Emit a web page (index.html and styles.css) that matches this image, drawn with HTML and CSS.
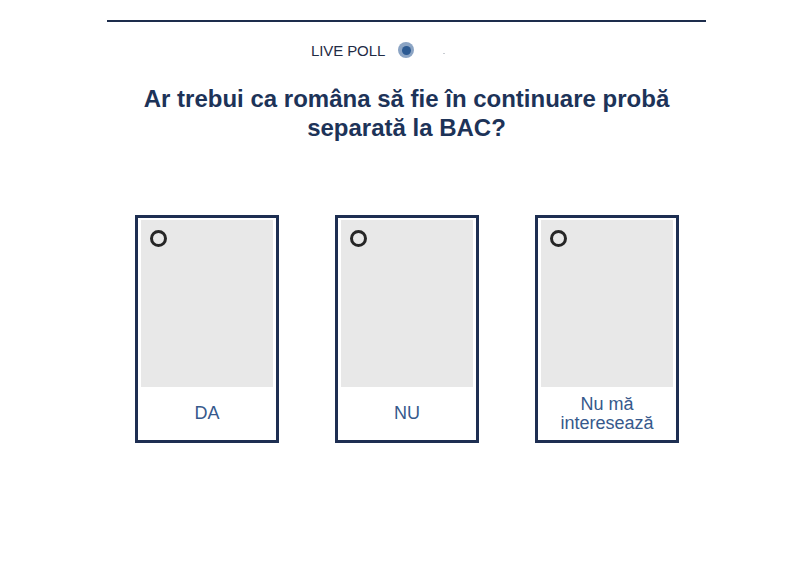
FILE: index.html
```html
<!DOCTYPE html>
<html lang="ro">
<head>
<meta charset="utf-8">
<link rel="stylesheet" href="styles.css">
</head>
<body>
<div class="page">
  <hr class="rule">
  <div class="live">
    <span class="live-text">LIVE POLL</span>
    <span class="pulse"><span class="pulse-dot"></span></span>
    <span class="speck"></span>
  </div>
  <h1 class="question">Ar trebui ca româna să fie în continuare probă<br>separată la BAC?</h1>
  <div class="options">
    <div class="card">
      <div class="thumb"><span class="radio"></span></div>
      <div class="label">DA</div>
    </div>
    <div class="card">
      <div class="thumb"><span class="radio"></span></div>
      <div class="label">NU</div>
    </div>
    <div class="card">
      <div class="thumb"><span class="radio"></span></div>
      <div class="label">Nu mă<br>interesează</div>
    </div>
  </div>
</div>
</body>
</html>
```
FILE: styles.css
```css
html, body {
  margin: 0;
  padding: 0;
  background: #ffffff;
  font-family: "Liberation Sans", Arial, sans-serif;
}
.page {
  width: 800px;
  padding-top: 20px;
}
.rule {
  margin: 0 0 0 107px;
  width: 599px;
  height: 2px;
  border: 0;
  background: #1d2d4c;
}
.live {
  display: flex;
  align-items: center;
  padding-left: 311px;
  margin-top: 18px;
  height: 20px;
}
.live-text {
  font-size: 15px;
  color: #1f2b45;
  letter-spacing: -0.1px;
}
.pulse {
  width: 16px;
  height: 16px;
  border-radius: 50%;
  background: #8ba4c4;
  margin-left: 13px;
  display: flex;
  align-items: center;
  justify-content: center;
}
.pulse-dot {
  width: 9px;
  height: 9px;
  border-radius: 50%;
  background: #2c5a92;
}
.speck {
  width: 2px;
  height: 1px;
  background: #c8ccd2;
  margin-left: 29px;
  margin-top: 6px;
}
.question {
  margin: 24px 0 0 0;
  text-align: center;
  width: 813px;
  font-size: 24px;
  line-height: 29px;
  font-weight: bold;
  color: #1d3358;
}
.options {
  display: flex;
  gap: 56px;
  padding-left: 135px;
  margin-top: 73px;
}
.card {
  width: 144px;
  height: 228px;
  box-sizing: border-box;
  border: 3px solid #1e2f52;
  padding: 2px 3px 3px 3px;
  display: flex;
  flex-direction: column;
  background: #ffffff;
}
.thumb {
  height: 167px;
  background: #e8e8e8;
  padding: 10px 0 0 9px;
  box-sizing: border-box;
}
.radio {
  display: block;
  width: 17px;
  height: 17px;
  box-sizing: border-box;
  border: 3px solid #262626;
  border-radius: 50%;
}
.label {
  flex: 1;
  display: flex;
  align-items: center;
  justify-content: center;
  text-align: center;
  padding-top: 3px;
  font-size: 18px;
  line-height: 19px;
  color: #36598c;
}
```
